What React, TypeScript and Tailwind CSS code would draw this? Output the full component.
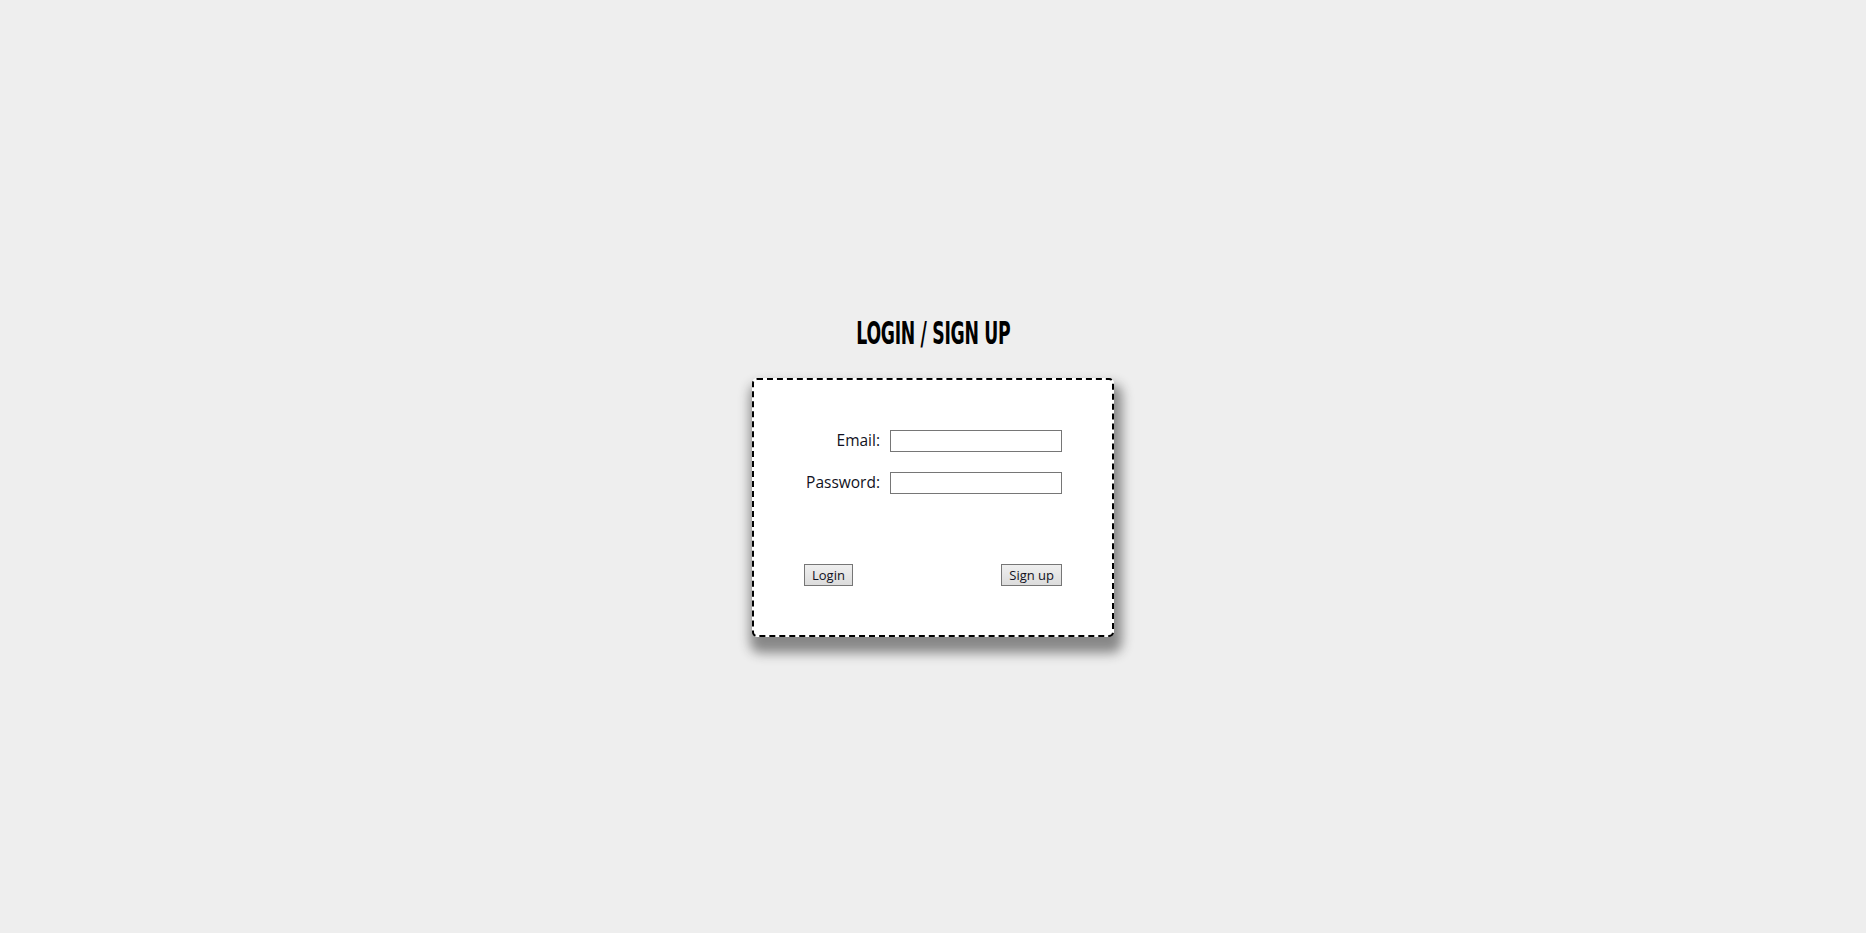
import React from 'react';

const App = () => {
    return (
        <div className="min-h-screen w-full bg-[#eeeeee] flex flex-col items-center pt-[313px] font-['Open_Sans',sans-serif] text-[#111122]">
            <h1 className="font-['Liberation_Sans_Narrow','DejaVu_Sans_Condensed',sans-serif] font-bold text-[32px] leading-[40px] tracking-[-0.5px] text-black scale-x-[0.6] uppercase">
                Login / Sign up
            </h1>
            <div className="mt-[25px] w-[362px] h-[259px] bg-white border-2 border-dashed border-black rounded-[5px] shadow-[3px_11px_12px_5px_#888888] px-[50px] py-[50px] flex flex-col">
                <div className="flex flex-col gap-[20px] text-[15.5px]">
                    <div className="flex items-center gap-[10px]">
                        <label className="w-[76px] text-right leading-[20px] -translate-y-[1px]">Email:</label>
                        <input type="text" className="w-[172px] h-[22px] border border-[#767676] bg-white outline-none" />
                    </div>
                    <div className="flex items-center gap-[10px]">
                        <label className="w-[76px] text-right leading-[20px] -translate-y-[1px]">Password:</label>
                        <input type="password" className="w-[172px] h-[22px] border border-[#767676] bg-white outline-none" />
                    </div>
                </div>
                <div className="mt-[70px] flex justify-between items-center text-[13px]">
                    <button className="h-[22px] px-[7px] border border-[#767676] bg-gradient-to-b from-[#efefef] to-[#dcdcdc] leading-none">
                        Login
                    </button>
                    <button className="h-[22px] px-[7px] border border-[#767676] bg-gradient-to-b from-[#efefef] to-[#dcdcdc] leading-none">
                        Sign up
                    </button>
                </div>
            </div>
        </div>
    );
}

export default App;
